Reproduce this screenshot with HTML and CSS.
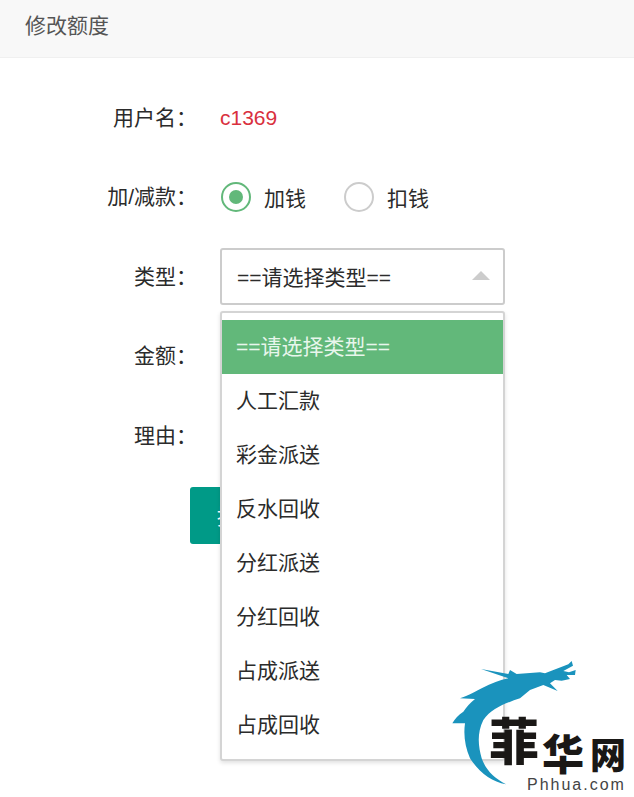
FILE: index.html
```html
<!DOCTYPE html>
<html lang="zh-CN">
<head>
    <meta charset="UTF-8">
    <meta name="viewport" content="width=device-width, initial-scale=1.0">
    <title>修改额度</title>
    <link rel="stylesheet" href="styles.css">
</head>
<body>
    <div class="header">修改额度</div>

    <div class="form">
        <div class="row">
            <label class="row-label">用户名：</label>
            <span class="username">c1369</span>
        </div>
        <div class="row">
            <label class="row-label">加/减款：</label>
            <div class="radio-group">
                <span class="radio radio-on"></span>
                <span class="radio-text">加钱</span>
                <span class="radio"></span>
                <span class="radio-text">扣钱</span>
            </div>
        </div>
        <div class="row">
            <label class="row-label">类型：</label>
            <div class="select-wrap">
                <div class="select">
                    <span>==请选择类型==</span>
                    <span class="arrow"></span>
                </div>
                <ul class="dropdown">
                    <li class="active">==请选择类型==</li>
                    <li>人工汇款</li>
                    <li>彩金派送</li>
                    <li>反水回收</li>
                    <li>分红派送</li>
                    <li>分红回收</li>
                    <li>占成派送</li>
                    <li>占成回收</li>
                </ul>
            </div>
        </div>
        <div class="row">
            <label class="row-label">金额：</label>
        </div>
        <div class="row">
            <label class="row-label">理由：</label>
        </div>
        <button class="submit">提交</button>
    </div>

    <div class="watermark">
        <svg class="dragon" viewBox="0 0 612 471" width="204" height="157">
            <path fill="#1a93bd" d="M153 87 L235 102 L240 90 L260 102 L330 97 L345 100 L415 73 L425 63 L429 77 L400 93 L417 97 L437 90 L435 105 L410 105 L420 117 L395 122 L375 120 L360 130 L383 153 L340 135 L300 150 L270 175 C225 190 185 205 160 240 C140 280 145 320 155 355 C170 395 195 415 228 433 C185 425 150 400 120 355 C105 320 100 285 105 250 L67 250 C75 235 85 225 100 215 C110 200 120 190 135 177 L90 175 C120 165 135 155 155 145 C185 130 210 120 235 115 Z"/>
        </svg>
        <div class="brand">
            <span class="brand-big">菲</span><span class="brand-mid">华</span><span class="brand-small">网</span>
        </div>
        <div class="brand-url">Phhua.com</div>
    </div>
</body>
</html>
```

FILE: styles.css
```css
body {
    margin: 0;
    padding: 0;
    background-color: #fff;
    color: #2b2b2b;
    font-family: "Liberation Sans", "Noto Sans CJK SC", sans-serif;
    font-size: 21px;
    height: 797px;
    overflow: hidden;
    position: relative;
}
.header {
    height: 58px;
    line-height: 51px;
    padding-left: 25px;
    background-color: #f8f8f8;
    border-bottom: 1px solid #f0f0f0;
    box-sizing: border-box;
    color: #555;
}
.form {
    padding-top: 20px;
}
.row {
    display: flex;
    align-items: center;
    height: 79.5px;
}
.row-label {
    width: 197px;
    text-align: right;
    margin-right: 23px;
    padding-bottom: 4px;
    flex-shrink: 0;
    white-space: nowrap;
}
.username {
    color: #d9303e;
    font-size: 21px;
}
.radio-group {
    display: flex;
    align-items: center;
}
.radio {
    width: 30px;
    height: 30px;
    border: 2px solid #ccc;
    border-radius: 50%;
    box-sizing: border-box;
    background-color: #fff;
    margin-left: 1px;
    position: relative;
}
.radio-on {
    border-color: #62b87a;
}
.radio-on::after {
    content: "";
    position: absolute;
    left: 6px;
    top: 6px;
    width: 14px;
    height: 14px;
    border-radius: 50%;
    background-color: #62b87a;
}
.radio-text {
    margin-left: 13px;
    margin-right: 37px;
}
.select-wrap {
    position: relative;
    width: 285px;
}
.select {
    height: 57px;
    box-sizing: border-box;
    border: 2px solid #ccc;
    border-radius: 3px;
    padding: 0 13px 0 15px;
    display: flex;
    align-items: center;
    justify-content: space-between;
}
.select span:first-child {
    padding-bottom: 2px;
}
.arrow {
    width: 0;
    height: 0;
    border-left: 9px solid transparent;
    border-right: 9px solid transparent;
    border-bottom: 9px solid #ccc;
    margin-bottom: 2px;
}
.dropdown {
    position: absolute;
    left: 0;
    top: 63px;
    width: 285px;
    box-sizing: border-box;
    margin: 0;
    padding: 7px 0;
    list-style: none;
    background-color: #fff;
    border: 2px solid #d4d4d4;
    border-radius: 3px;
    box-shadow: 0 2px 4px rgba(0, 0, 0, 0.12);
    z-index: 2;
}
.dropdown li {
    height: 54px;
    line-height: 54px;
    padding-left: 14px;
}
.dropdown li.active {
    background-color: #62b87a;
    color: #e8f6ec;
}
.submit {
    display: block;
    width: 96px;
    height: 57px;
    margin: 11px 0 0 190px;
    padding: 0;
    background-color: #009a87;
    color: #fff;
    font-family: inherit;
    font-size: 21px;
    border: none;
    border-radius: 3px;
}
.watermark {
    position: absolute;
    left: 430px;
    top: 640px;
    width: 204px;
    height: 157px;
    z-index: 3;
}
.dragon {
    display: block;
}
.brand {
    position: absolute;
    left: 59px;
    bottom: 24px;
    display: flex;
    align-items: flex-end;
    font-family: "Noto Sans CJK SC", sans-serif;
    font-weight: 900;
    color: #1a1816;
    line-height: 1;
}
.brand-big {
    font-size: 50px;
    margin-bottom: 10px;
}
.brand-mid {
    font-size: 42px;
    margin-left: 3px;
}
.brand-small {
    font-size: 36px;
    margin-left: 6px;
    margin-bottom: 2px;
}
.brand-url {
    position: absolute;
    left: 97px;
    top: 136px;
    font-size: 16px;
    line-height: 18px;
    letter-spacing: 2px;
    color: #444;
    white-space: nowrap;
}
```
